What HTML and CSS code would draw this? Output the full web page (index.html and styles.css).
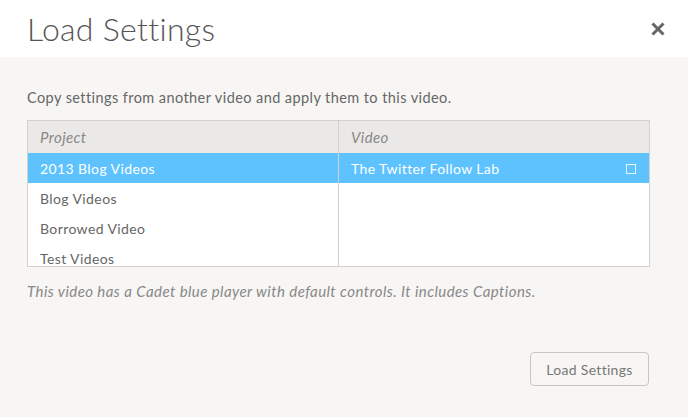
FILE: index.html
```html
<!DOCTYPE html>
<html>
<head>
<meta charset="utf-8">
<link rel="stylesheet" href="styles.css">
</head>
<body>
<div class="modal">
  <header class="modal-header">
    <h1 class="title">Load Settings</h1>
    <button class="close" aria-label="Close">
      <svg width="16" height="16" viewBox="0 0 16 16"><path d="M2.5 2.5 L13.5 13.5 M13.5 2.5 L2.5 13.5" stroke="#666" stroke-width="3" stroke-linecap="butt"/></svg>
    </button>
  </header>
  <main class="modal-body">
    <p class="desc">Copy settings from another video and apply them to this video.</p>
    <div class="picker">
      <div class="col col-project">
        <div class="col-head">Project</div>
        <div class="col-list">
          <div class="row selected">2013 Blog Videos</div>
          <div class="row">Blog Videos</div>
          <div class="row">Borrowed Video</div>
          <div class="row">Test Videos</div>
        </div>
      </div>
      <div class="col col-video">
        <div class="col-head">Video</div>
        <div class="col-list">
          <div class="row selected"><span>The Twitter Follow Lab</span><span class="check"></span></div>
        </div>
      </div>
    </div>
    <p class="note">This video has a Cadet blue player with default controls. It includes Captions.</p>
    <div class="actions">
      <button class="btn">Load Settings</button>
    </div>
  </main>
</div>
</body>
</html>
```
FILE: styles.css
```css
html, body {
  margin: 0;
  padding: 0;
  background: #f7f6f4;
  font-family: "Lato", "Open Sans", sans-serif;
}
.modal {
  width: 688px;
  height: 417px;
  display: flex;
  flex-direction: column;
}
.modal-header {
  background: #ffffff;
  height: 57px;
  display: flex;
  align-items: center;
  justify-content: space-between;
  padding: 0 22px 0 27px;
  box-sizing: border-box;
}
.title {
  margin: 0;
  font-weight: 300;
  font-size: 32px;
  line-height: 40px;
  color: #555555;
  letter-spacing: 0.3px;
}
.close {
  border: 0;
  background: none;
  padding: 0;
  width: 16px;
  height: 16px;
  display: flex;
}
.modal-body {
  flex: 1;
  padding: 0 38px 0 27px;
}
.desc {
  margin: 32px 0 0;
  font-size: 14.5px;
  letter-spacing: 0.42px;
  color: #666;
  line-height: 18px;
}
.picker {
  margin-top: 13px;
  display: flex;
  border: 1px solid #d3d1ce;
  height: 145px;
  background: #fff;
}
.col {
  flex: 1;
  display: flex;
  flex-direction: column;
  overflow: hidden;
}
.col-project {
  border-right: 1px solid #d3d1ce;
}
.col-head {
  background: #eae9e7;
  height: 32px;
  line-height: 32px;
  padding-left: 12px;
  font-style: italic;
  font-size: 15px;
  letter-spacing: 0.4px;
  color: #888;
  flex: none;
}
.col-list {
  overflow: hidden;
}
.row {
  height: 30px;
  line-height: 30px;
  padding: 1px 13px 0 12px;
  box-sizing: border-box;
  font-size: 14px;
  letter-spacing: 0.4px;
  color: #666;
  display: flex;
  justify-content: space-between;
  align-items: center;
}
.row.selected {
  background: #5ec2fe;
  color: #fff;
}
.check {
  width: 8px;
  height: 8px;
  border: 1.5px solid #e8f6ff;
}
.note {
  margin: 15px 0 0;
  font-size: 15px;
  letter-spacing: 0.43px;
  font-style: italic;
  color: #888;
  line-height: 18px;
}
.actions {
  display: flex;
  justify-content: flex-end;
  margin-top: 52px;
}
.btn {
  font-family: inherit;
  font-size: 14px;
  letter-spacing: 0.3px;
  color: #777;
  background: #f7f6f4;
  border: 1px solid #c8c6c3;
  border-radius: 4px;
  width: 119px;
  height: 34px;
  margin-right: 1px;
}
```
